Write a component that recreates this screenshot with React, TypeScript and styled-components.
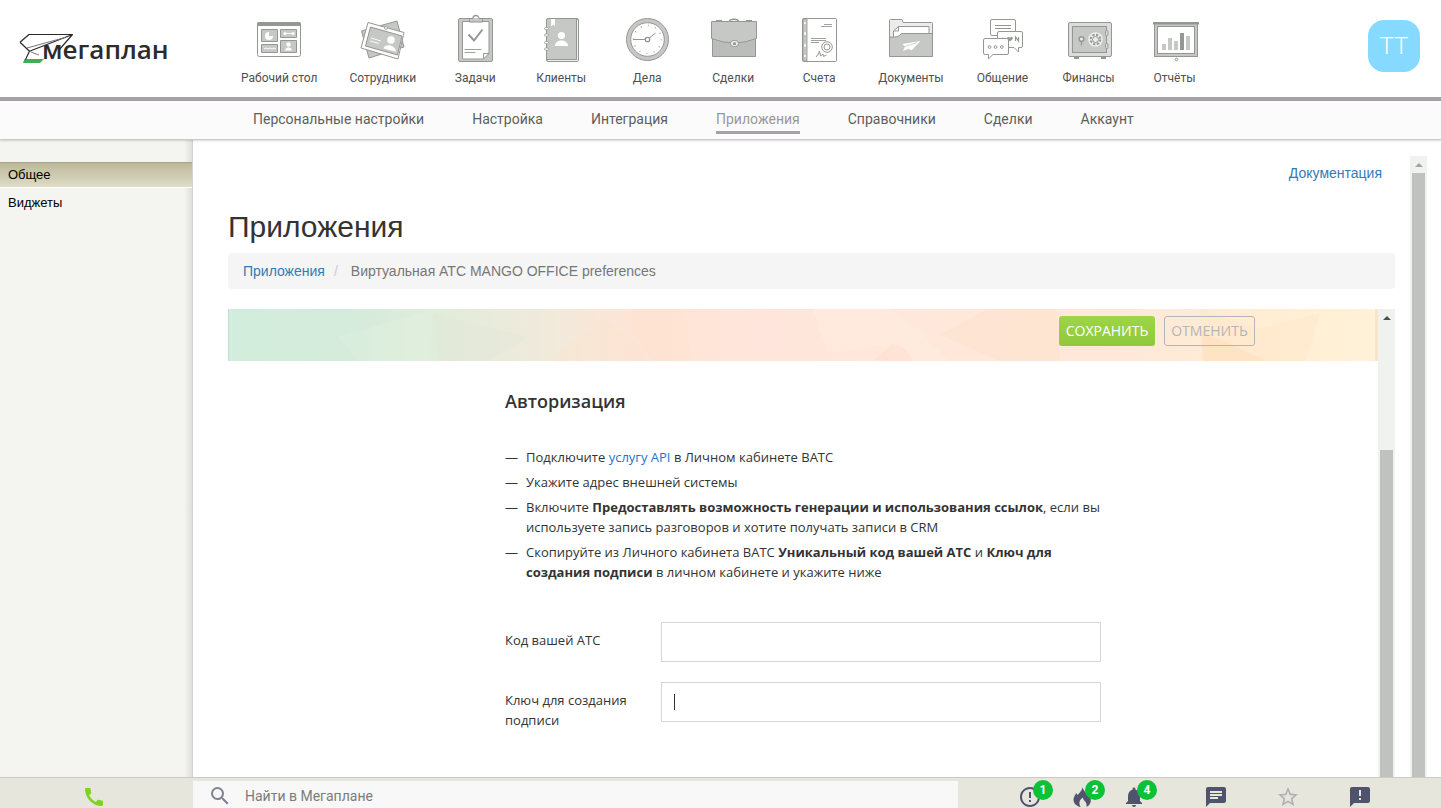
import React from 'react';
import styled, { createGlobalStyle } from 'styled-components';
import {
  MdCall,
  MdSearch,
  MdErrorOutline,
  MdNotifications,
  MdChat,
  MdStarBorder,
  MdAnnouncement,
} from 'react-icons/md';

const roboto = `Roboto, 'Liberation Sans', sans-serif`;
const arial = `'Liberation Sans', Arial, sans-serif`;
const openSans = `'Open Sans', 'Noto Sans', sans-serif`;

const GlobalStyle = createGlobalStyle`
  * { box-sizing: border-box; }
  body { margin: 0; background: #fff; font-family: ${arial}; }
  a { text-decoration: none; }
`;

const Page = styled.div`
  display: flex;
  flex-direction: column;
  height: 100vh;
  overflow: hidden;
  border-right: 1px solid #d2d2d2;
`;

/* ---------- header ---------- */

const Header = styled.header`
  flex: none;
  display: flex;
  align-items: flex-start;
  background: #fff;
  border-bottom: 4px solid #a5a2a5;
  height: 101px;
`;

const LogoLink = styled.a`
  flex: none;
  width: 241px;
  height: 97px;
`;

const ModuleNav = styled.nav`
  flex: 1;
  display: flex;
  gap: 32px;
  padding-top: 14px;
`;

const ModuleLink = styled.a`
  display: flex;
  flex-direction: column;
  align-items: center;
  gap: 6px;
  min-width: 54px;
  font: 12px/16px ${roboto};
  color: #505050;
  white-space: nowrap;
`;

const Avatar = styled.button`
  flex: none;
  width: 52px;
  height: 52px;
  margin: 20px 21px 0 0;
  padding: 0;
  border: 0;
  border-radius: 16px;
  background: #87daff;
  color: #fff;
  font: 300 24px/52px ${roboto};
`;

const SubNav = styled.nav`
  flex: none;
  display: flex;
  align-items: flex-start;
  gap: 48px;
  height: 39px;
  padding: 8px 0 0 253px;
  background: #fafbfa;
  border-bottom: 1px solid #c9c9c9;
  box-shadow: 0 1px 2px rgba(0, 0, 0, 0.15);
  position: relative;
  z-index: 1;
`;

const SubLink = styled.a<{ $active?: boolean }>`
  padding-bottom: 2px;
  border-bottom: 3px solid ${(p) => (p.$active ? '#a5a2a5' : 'transparent')};
  font: 14px/20px ${roboto};
  color: ${(p) => (p.$active ? '#9a979a' : '#5e5e5e')};
  white-space: nowrap;
`;

/* ---------- body ---------- */

const Body = styled.div`
  flex: 1;
  min-height: 0;
  display: flex;
`;

const Sidebar = styled.aside`
  flex: none;
  width: 193px;
  padding-top: 22px;
  display: flex;
  flex-direction: column;
  gap: 2px;
  border-right: 1px solid #d3d3cf;
  background: linear-gradient(to right, rgba(0, 0, 0, 0) 184px, rgba(80, 80, 70, 0.13) 192px), #f4f5f0;
`;

const SideLink = styled.a<{ $active?: boolean }>`
  padding-left: 8px;
  font: 13px/24px ${arial};
  color: #000;
  border-top: 1px solid ${(p) => (p.$active ? '#a9a587' : 'transparent')};
  border-bottom: 1px solid ${(p) => (p.$active ? '#fff' : 'transparent')};
  background: ${(p) => (p.$active ? 'linear-gradient(#bcb99a, #dfdcc8)' : 'none')};
`;

const Workspace = styled.main`
  flex: 1;
  min-width: 0;
  display: flex;
  margin: 16px 14px 0 0;
`;

const Document = styled.div`
  flex: 1;
  min-width: 0;
  display: flex;
  flex-direction: column;
  padding: 7px 15px 0 35px;
`;

const DocLink = styled.a`
  align-self: flex-end;
  margin-right: 13px;
  font: 14px/20px ${arial};
  color: #337ab7;
`;

const Title = styled.h1`
  margin: 27px 0 10px;
  font: 400 30px/33px ${arial};
  color: #333;
`;

const Breadcrumbs = styled.nav`
  flex: none;
  display: flex;
  gap: 9px;
  padding: 8px 15px;
  margin-bottom: 20px;
  border-radius: 4px;
  background: #f4f5f4;
  font: 14px/20px ${arial};
  color: #777;
`;

const Crumb = styled.a`
  color: #337ab7;
`;

const Slash = styled.span`
  color: #ccc;
  padding-right: 4px;
`;

const Frame = styled.div`
  flex: 1;
  min-height: 0;
  display: flex;
  overflow: hidden;
`;

const FrameContent = styled.div`
  flex: 1;
  min-width: 0;
`;

const ScrollTrack = styled.div`
  flex: none;
  width: 17px;
  padding: 0 2px;
  display: flex;
  flex-direction: column;
  background: #f0f2f0;
`;

const ScrollArrow = styled.span<{ $dark?: boolean }>`
  flex: none;
  height: 17px;
  display: flex;
  align-items: center;
  justify-content: center;
  &::before {
    content: '';
    border: 4px solid transparent;
    border-top: 0;
    border-bottom-color: ${(p) => (p.$dark ? '#505050' : '#a3a3a3')};
  }
`;

const ScrollThumb = styled.div<{ $top?: number }>`
  flex: 1;
  margin-top: ${(p) => p.$top ?? 0}px;
  background: #bfc2bf;
`;

/* ---------- settings form ---------- */

const Banner = styled.div`
  position: relative;
  height: 52px;
  overflow: hidden;
  background: linear-gradient(
    to right,
    #d2eddd 0%,
    #d5ebdb 11%,
    #deeddb 17%,
    #e7ebdb 22%,
    #f0eadb 28%,
    #fae6d7 33%,
    #ffe4d6 38%,
    #ffe5db 46%,
    #ffe8db 60%,
    #ffe8d8 78%,
    #ffedd4 90%,
    #fff2d8 100%
  );
`;

const BannerArt = styled.svg`
  position: absolute;
  inset: 0;
  width: 100%;
  height: 100%;
`;

const BannerActions = styled.div`
  position: relative;
  display: flex;
  justify-content: flex-end;
  gap: 9px;
  max-width: 904px;
  margin: 0 auto;
  padding-top: 7px;
`;

const ActionButton = styled.button<{ $primary?: boolean }>`
  width: ${(p) => (p.$primary ? 96 : 91)}px;
  height: 30px;
  padding: 0;
  border-radius: 3px;
  border: ${(p) => (p.$primary ? '0' : '1px solid #b5b5b8')};
  background: ${(p) => (p.$primary ? 'linear-gradient(#9fd548, #90c83c)' : 'transparent')};
  color: ${(p) => (p.$primary ? '#fff' : '#b5b5b8')};
  font: 14px/28px ${openSans};
`;

const Form = styled.form`
  max-width: 596px;
  margin: 28px auto 0;
  font: 13px/20px ${openSans};
  color: #333;
`;

const FormTitle = styled.h2`
  margin: 0 0 34px;
  font: 600 18px/24px ${openSans};
`;

const Steps = styled.ul`
  list-style: none;
  margin: 0 0 40px;
  padding: 0;
  display: grid;
  gap: 5px;
`;

const Step = styled.li`
  display: flex;
  &::before {
    content: '—';
    flex: none;
    width: 21px;
  }
`;

const StepLink = styled.a`
  color: #1a75cf;
`;

const Field = styled.div`
  display: flex;
  align-items: flex-start;
  margin-bottom: 20px;
  height: 40px;
`;

const FieldLabel = styled.label`
  flex: none;
  width: 156px;
  padding: 8px 16px 0 0;
`;

const FieldInput = styled.input<{ $caret?: boolean }>`
  flex: 1;
  min-width: 0;
  height: 40px;
  padding: 0 13px;
  border: 1px solid #d5d7d5;
  outline: 0;
  background: ${(p) =>
    p.$caret ? 'linear-gradient(#333, #333) 12px 11px / 1px 16px no-repeat #fff' : '#fff'};
  font: 13px/20px ${openSans};
`;

/* ---------- bottom bar ---------- */

const BottomBar = styled.footer`
  flex: none;
  display: flex;
  height: 31px;
  padding-top: 3px;
  border-top: 1px solid #cdc9c4;
  background: #e6e6dc;
`;

const CallButton = styled.button`
  flex: none;
  width: 193px;
  padding: 4px 5px 0 0;
  border: 0;
  background: none;
  color: #7ed321;
  line-height: 0;
`;

const SearchBox = styled.label`
  flex: 0 1 765px;
  display: flex;
  align-items: center;
  gap: 13px;
  padding: 3px 0 0 15px;
  background: #f8f8f8;
  color: #7e8196;
`;

const SearchInput = styled.input`
  flex: 1;
  min-width: 0;
  padding: 0;
  border: 0;
  outline: 0;
  background: none;
  font: 14px/20px ${roboto};
  &::placeholder {
    color: #7c7c7c;
    opacity: 1;
  }
`;

const Tray = styled.div`
  flex: 1;
  display: flex;
  justify-content: flex-end;
  padding-right: 45px;
`;

const TrayGroup = styled.div`
  display: flex;
  margin-right: 20px;
`;

const TrayButton = styled.button<{ $wide?: boolean; $muted?: boolean }>`
  position: relative;
  width: ${(p) => (p.$wide ? 72 : 52)}px;
  padding: 4px 0 0;
  border: 0;
  background: none;
  line-height: 0;
  color: ${(p) => (p.$muted ? '#b0b0b4' : '#50536c')};
`;

const Badge = styled.span`
  position: absolute;
  left: 50%;
  top: -1px;
  margin-left: 3px;
  width: 20px;
  height: 20px;
  border-radius: 50%;
  background: #0bc135;
  color: #fff;
  font: 700 12px/20px ${roboto};
  text-align: center;
`;

/* ---------- drawings ---------- */

const G = '#c6c8c6';
const D = '#939893';

const Logo = () => (
  <svg width="180" height="80" viewBox="0 0 180 80" role="img" aria-label="Мегаплан">
    <path d="M24.5 59H44l-4 4H23z" fill="#3fae55" />
    <path d="M20 42.300L29 34.500H72.500L59 50M20 42.300L29.500 51.300L72.500 34.500M29.500 51.300L25.500 59.500" fill="none" stroke="#2b2b2b" strokeWidth="1.200" strokeLinejoin="round" />
    <path d="M27 48L65 37.500M31 52l8 3" fill="none" stroke="#777" strokeWidth="1" />
    <text x="42" y="59" fill="#2b2b2b" fontFamily="'Open Sans', sans-serif" fontWeight="600" fontSize="26">
      мегаплан
    </text>
  </svg>
);

const drawings: Record<string, React.ReactNode> = {
  desktop: (
    <>
      <rect x="5.500" y="8.500" width="43" height="34" rx="2" fill="#fff" stroke={D} />
      <path d="M5 12V10a2 2 0 0 1 2-2H47a2 2 0 0 1 2 2v2z" fill={D} />
      <g fill={G} stroke={D}>
        <path d="M9.500 15.500h16v12h-16zM28.500 15.500h16v8h-16zM9.500 30.500h16v8h-16zM28.500 26.500h16v12h-16z" />
      </g>
      <path d="M17 18a4 4 0 1 0 4 4h-4z" fill="#fff" />
      <circle cx="33" cy="19.500" r="1.500" fill="#fff" />
      <circle cx="41" cy="19.500" r="1.500" fill="#fff" />
      <path d="M33 19.500h8M12 35l2-1 2 1 2-1 2 1 2-1 2 1" fill="none" stroke="#fff" />
      <circle cx="36.500" cy="30.500" r="2.200" fill="#fff" />
      <path d="M33 36.500c0-4 7-4 7 0z" fill="#fff" />
    </>
  ),
  staff: (
    <>
      <path d="M5.500 17L41 7l7 26L13 44z" fill={G} stroke={D} />
      <path d="M12 8.500l36 10L42 45 5 34z" fill="#fff" stroke={D} strokeLinejoin="round" />
      <path d="M14.500 13L46 22l-4.500 19L9.500 32z" fill={G} stroke={D} />
      <circle cx="30" cy="14" r="1.500" fill="#fff" stroke={D} strokeWidth=".8" />
      <circle cx="35" cy="26" r="3.800" fill="#fff" />
      <path d="M27.500 34.500c1-5.500 12-4 12.500 3.300z" fill="#fff" />
      <path d="M15 24l10 3M14 27l9 2.500" stroke="#fff" strokeWidth=".9" />
    </>
  ),
  tasks: (
    <>
      <rect x="10.500" y="4.500" width="34" height="43" rx="1.500" fill={G} stroke={D} />
      <path d="M14.500 7.500h26.500v32l-6 5.500h-20.500z" fill="#fff" stroke={D} />
      <path d="M35.500 45v-5.500h5.500z" fill="#fff" stroke={D} />
      <rect x="21.500" y="4.500" width="13" height="3.500" fill={G} stroke={D} />
      <path d="M25 4.500a3 3 0 0 1 6 0" fill="#fff" stroke={D} strokeWidth="1.300" />
      <path d="M20.500 20.500l5.500 6 8.500-11" fill="none" stroke={D} strokeWidth="2" />
      <path d="M16.500 35.500h17M16.500 38.500h11" stroke={D} strokeWidth=".9" />
    </>
  ),
  clients: (
    <>
      <rect x="12.500" y="4.500" width="32" height="43" rx="1.500" fill={G} stroke={D} />
      <path d="M13 45.500H42.500V5" fill="none" stroke={D} />
      <path d="M14 46.500H43.500V6" fill="none" stroke="#fff" strokeWidth=".7" />
      <path d="M17 5h4v7l-2-1.200L17 12z" fill="#fff" />
      <g fill="#fff" stroke={D} strokeWidth=".8">
        <rect x="10.500" y="13.500" width="4" height="2.200" rx="1" />
        <rect x="10.500" y="20" width="4" height="2.200" rx="1" />
        <rect x="10.500" y="27.500" width="4" height="2.200" rx="1" />
        <rect x="10.500" y="34" width="4" height="2.200" rx="1" />
      </g>
      <circle cx="27.500" cy="21.500" r="3.600" fill="#fff" />
      <path d="M21 32c0-7.500 13-7.500 13 0z" fill="#fff" />
    </>
  ),
  clock: (
    <>
      <circle cx="27.500" cy="25.500" r="21" fill={G} stroke={D} />
      <circle cx="27.500" cy="25.500" r="16.800" fill="#fff" stroke={D} />
      <circle cx="27.500" cy="25.500" r="14" fill="none" stroke={D} strokeWidth="1.600" strokeDasharray=".8 6.530" />
      <path d="M13 25.500h14.500l8-6.500" fill="none" stroke={D} />
      <circle cx="27.500" cy="25.500" r="2.200" fill="#fff" stroke={D} strokeWidth="1.300" />
    </>
  ),
  deals: (
    <>
      <path d="M23.500 7.500c0-3 9-3 9 0" fill="none" stroke={D} strokeWidth="1.500" />
      <path d="M10 7h6M40 7h6" stroke={D} strokeWidth="2" />
      <path d="M6.500 20h43v22.500h-43z" fill="#bbbdbb" stroke={D} />
      <path d="M5.500 7.500h45v17Q39 29 28 29T5.500 24.500z" fill={G} stroke={D} />
      <rect x="24.500" y="26.500" width="8" height="6" rx="3" fill="#eee" stroke={D} />
      <path d="M27 31v-1.500a1.500 1.500 0 0 1 3 0V31z" fill={D} />
    </>
  ),
  bills: (
    <>
      <rect x="10.500" y="4.500" width="34" height="43" rx="1" fill="#fff" stroke={D} />
      <path d="M11 5h4v42h-4z" fill={G} stroke={D} strokeWidth=".8" />
      <path d="M13 8v2M13 18v3M13 30v3M13 41v2" stroke="#fff" strokeWidth="1.500" />
      <path d="M32 10.500h8M29 12.500h11M19 24.500h15M19 26.500h15M19 28.500h8" stroke={D} strokeWidth=".9" />
      <circle cx="35" cy="33" r="5.300" fill="#fff" stroke={D} />
      <circle cx="35" cy="33" r="3" fill="#fff" stroke={D} />
      <path d="M24 43q3-3 3.500-6l1 5 2.500-2 .5 2.500 3-1.500" fill="none" stroke={D} />
    </>
  ),
  docs: (
    <>
      <path d="M5.500 42V6.500q0-1 1-1H18l1 3h28.500q1 0 1 1V42z" fill="#ececec" stroke={D} />
      <path d="M9.500 42V17l5-4.500H45V42z" fill="#fff" stroke={D} />
      <path d="M9.500 17h5v-4.500" fill="none" stroke={D} />
      <path d="M5.500 42.500V23q9 1 12-3.500h31v23z" fill={G} stroke={D} strokeLinejoin="round" />
      <path d="M18.300 30L36.500 27L27.500 36.500L24.500 34.800L19 37l2-4.500z" fill="#fff" />
      <path d="M21 32.500L33 28.500" stroke={G} strokeWidth=".8" />
    </>
  ),
  chat: (
    <>
      <g fill="#fff" stroke={D} strokeLinejoin="round">
        <path d="M16 5.500h22q1.500 0 1.500 1.500v13q0 1.500-1.500 1.500H16q-1.500 0-1.500-1.500V7q0-1.500 1.500-1.500z" />
        <path d="M23 17.500h22q1.500 0 1.500 1.500v13q0 1.500-1.500 1.500h-2.500v4.500l-4.500-4.500H23q-1.500 0-1.500-1.500V19q0-1.500 1.500-1.500z" />
      </g>
      <path d="M19 11.500h16M19 14.500h16" stroke={D} />
      <path d="M26 24l2 1M39.500 27v-4l3 4v-4" fill="none" stroke={D} strokeWidth="1.200" />
      <path d="M34 27.500l-3-3c0-2 2-2 3-.7 1-1.300 3-1.300 3 .7z" fill={D} />
      <path d="M9 24.500h22q1.500 0 1.500 1.500v13q0 1.500-1.500 1.500H17l-4.500 4.300V40.500H9q-1.500 0-1.500-1.500V26q0-1.500 1.500-1.500z" fill="#fff" stroke={D} strokeLinejoin="round" />
      <g fill="#fff" stroke={D}>
        <circle cx="13.500" cy="33" r="1.400" />
        <circle cx="19.500" cy="33" r="1.400" />
        <circle cx="25.800" cy="33" r="1.400" />
      </g>
    </>
  ),
  finance: (
    <>
      <path d="M12 42h5v3h-5zM39 42h5v3h-5z" fill={D} />
      <rect x="6.500" y="8.500" width="43" height="34" rx="1.500" fill="#dcdcdc" stroke={D} />
      <rect x="10.500" y="12.500" width="34" height="26" fill={G} stroke={D} />
      <rect x="43.500" y="16.500" width="2.500" height="5" rx="1" fill="#dcdcdc" stroke={D} />
      <rect x="43.500" y="29.500" width="2.500" height="5" rx="1" fill="#dcdcdc" stroke={D} />
      <circle cx="19.500" cy="25" r="2.300" fill="#eee" stroke={D} strokeWidth="1.600" />
      <path d="M19.500 27v4.500" stroke={D} strokeWidth="1.200" />
      <circle cx="33.500" cy="25.500" r="7.300" fill="#ececec" />
      <circle cx="33.500" cy="25.500" r="4.800" fill="none" stroke={D} strokeWidth="2" strokeDasharray="2.200 1.570" />
      <circle cx="33.500" cy="25.500" r="3" fill="none" stroke={D} />
    </>
  ),
  reports: (
    <>
      <rect x="6.500" y="9.500" width="43" height="33" fill={G} stroke={D} />
      <path d="M5 8h46v2.500H5z" fill={D} />
      <rect x="9.500" y="12.500" width="37" height="27" fill="#fff" stroke={D} />
      <path d="M14 30h4v6h-4zM20 24h4v12h-4zM26 27h4v9h-4zM38 22h4v14h-4z" fill={G} />
      <path d="M32 19h4v17h-4z" fill={D} />
      <circle cx="28.500" cy="45.500" r="1.300" fill="#fff" stroke={D} />
    </>
  ),
};

const ModuleIcon = ({ name }: { name: string }) => (
  <svg width="54" height="50" viewBox="0 0 54 50" aria-hidden="true">
    {drawings[name]}
  </svg>
);

const Flame = () => (
  <svg width="24" height="24" viewBox="0 0 24 24" fill="currentColor" aria-hidden="true">
    <path d="M12.500 2c.2 3 3.500 5 4.700 8.500.5-1 .8-1.800.7-3 2.300 2.700 3.400 6 2.800 9-.4 2.300-1.900 4.300-4.200 5.500.7-2.600-.5-4.700-2-6.300-.9-1-1.600-2-1.500-3.200-2.500 1.600-3.900 4-3.600 6 .1 1.400.6 2.500 1.300 3.500-4.200-.8-7.200-3.600-7.200-7.300 0-2.600 1.600-4.300 2.600-6.700.7.600 1 1.300 1.200 2C9.500 8 12.300 5.500 12.500 2z" />
  </svg>
);

/* ---------- data ---------- */

const modules = [
  ['desktop', 'Рабочий стол'],
  ['staff', 'Сотрудники'],
  ['tasks', 'Задачи'],
  ['clients', 'Клиенты'],
  ['clock', 'Дела'],
  ['deals', 'Сделки'],
  ['bills', 'Счета'],
  ['docs', 'Документы'],
  ['chat', 'Общение'],
  ['finance', 'Финансы'],
  ['reports', 'Отчёты'],
];

const sections = [
  'Персональные настройки',
  'Настройка',
  'Интеграция',
  'Приложения',
  'Справочники',
  'Сделки',
  'Аккаунт',
];

export default function App() {
  return (
    <Page>
      <GlobalStyle />
      <Header>
        <LogoLink href="#">
          <Logo />
        </LogoLink>
        <ModuleNav>
          {modules.map(([icon, label]) => (
            <ModuleLink href="#" key={icon}>
              <ModuleIcon name={icon} />
              {label}
            </ModuleLink>
          ))}
        </ModuleNav>
        <Avatar>TT</Avatar>
      </Header>
      <SubNav>
        {sections.map((s) => (
          <SubLink href="#" key={s} $active={s === 'Приложения'}>
            {s}
          </SubLink>
        ))}
      </SubNav>

      <Body>
        <Sidebar>
          <SideLink href="#" $active>Общее</SideLink>
          <SideLink href="#">Виджеты</SideLink>
        </Sidebar>
        <Workspace>
          <Document>
            <DocLink href="#">Документация</DocLink>
            <Title>Приложения</Title>
            <Breadcrumbs>
              <Crumb href="#">Приложения</Crumb>
              <Slash>/</Slash>
              <span>Виртуальная АТС MANGO OFFICE preferences</span>
            </Breadcrumbs>
            <Frame>
              <FrameContent>
                <Banner>
                  <BannerArt viewBox="0 0 1150 52" preserveAspectRatio="none" aria-hidden="true">
                    <path d="M0 0h1v52H0z" fill="#bfe0cc" />
                    <path d="M1147 0h3v52h-3z" fill="#f7e6c8" />
                    <path d="M110 28L205 0 202 52H130z" fill="#e6f3e2" opacity=".25" />
                    <path d="M205 5L300 28 260 52H212z" fill="#e2e5d6" opacity=".35" />
                    <path d="M340 36L375 10 410 34 420 52H320z" fill="#fbe3cb" opacity=".25" />
                    <path d="M405 0h50l8 52h-38L405 26z" fill="#ffe0cd" opacity=".4" />
                    <path d="M585 0h75l30 20 30 32h-35L650 36 600 44z" fill="#fff1e2" opacity=".35" />
                    <path d="M685 52q-10-18-22-16l-18 16z" fill="#ffdccb" opacity=".4" />
                    <path d="M758 0h70l4 52h-60l-60-26z" fill="#fde0c8" opacity=".4" />
                    <path d="M972 0l60 20 60-16-14 48H975z" fill="#ffe3c2" opacity=".3" />
                    <path d="M973 22l66 30h-64z" fill="#ffd9b4" opacity=".4" />
                  </BannerArt>
                  <BannerActions>
                    <ActionButton type="submit" form="auth" $primary>СОХРАНИТЬ</ActionButton>
                    <ActionButton type="reset" form="auth">ОТМЕНИТЬ</ActionButton>
                  </BannerActions>
                </Banner>
                <Form id="auth">
                  <FormTitle>Авторизация</FormTitle>
                  <Steps>
                    <Step>
                      <span>Подключите <StepLink href="#">услугу API</StepLink> в Личном кабинете ВАТС</span>
                    </Step>
                    <Step>
                      <span>Укажите адрес внешней системы</span>
                    </Step>
                    <Step>
                      <span>
                        Включите <b>Предоставлять возможность генерации и использования ссылок</b>, если вы
                        используете запись разговоров и хотите получать записи в CRM
                      </span>
                    </Step>
                    <Step>
                      <span>
                        Скопируйте из Личного кабинета ВАТС <b>Уникальный код вашей АТС</b> и{' '}
                        <b>Ключ для создания подписи</b> в личном кабинете и укажите ниже
                      </span>
                    </Step>
                  </Steps>
                  <Field>
                    <FieldLabel htmlFor="code">Код вашей АТС</FieldLabel>
                    <FieldInput id="code" type="text" />
                  </Field>
                  <Field>
                    <FieldLabel htmlFor="key">Ключ для создания подписи</FieldLabel>
                    <FieldInput id="key" type="text" $caret />
                  </Field>
                </Form>
              </FrameContent>
              <ScrollTrack>
                <ScrollArrow $dark />
                <ScrollThumb $top={124} />
              </ScrollTrack>
            </Frame>
          </Document>
          <ScrollTrack>
            <ScrollArrow />
            <ScrollThumb />
          </ScrollTrack>
        </Workspace>
      </Body>

      <BottomBar>
        <CallButton aria-label="Позвонить">
          <MdCall size={24} />
        </CallButton>
        <SearchBox>
          <MdSearch size={24} />
          <SearchInput type="text" placeholder="Найти в Мегаплане" />
        </SearchBox>
        <Tray>
          <TrayGroup>
            <TrayButton aria-label="Важное">
              <MdErrorOutline size={24} />
              <Badge>1</Badge>
            </TrayButton>
            <TrayButton aria-label="Срочное">
              <Flame />
              <Badge>2</Badge>
            </TrayButton>
            <TrayButton aria-label="Уведомления">
              <MdNotifications size={24} />
              <Badge>4</Badge>
            </TrayButton>
          </TrayGroup>
          <TrayButton $wide aria-label="Сообщения">
            <MdChat size={24} />
          </TrayButton>
          <TrayButton $wide $muted aria-label="Избранное">
            <MdStarBorder size={24} />
          </TrayButton>
          <TrayButton $wide aria-label="Обратная связь">
            <MdAnnouncement size={24} />
          </TrayButton>
        </Tray>
      </BottomBar>
    </Page>
  );
}
